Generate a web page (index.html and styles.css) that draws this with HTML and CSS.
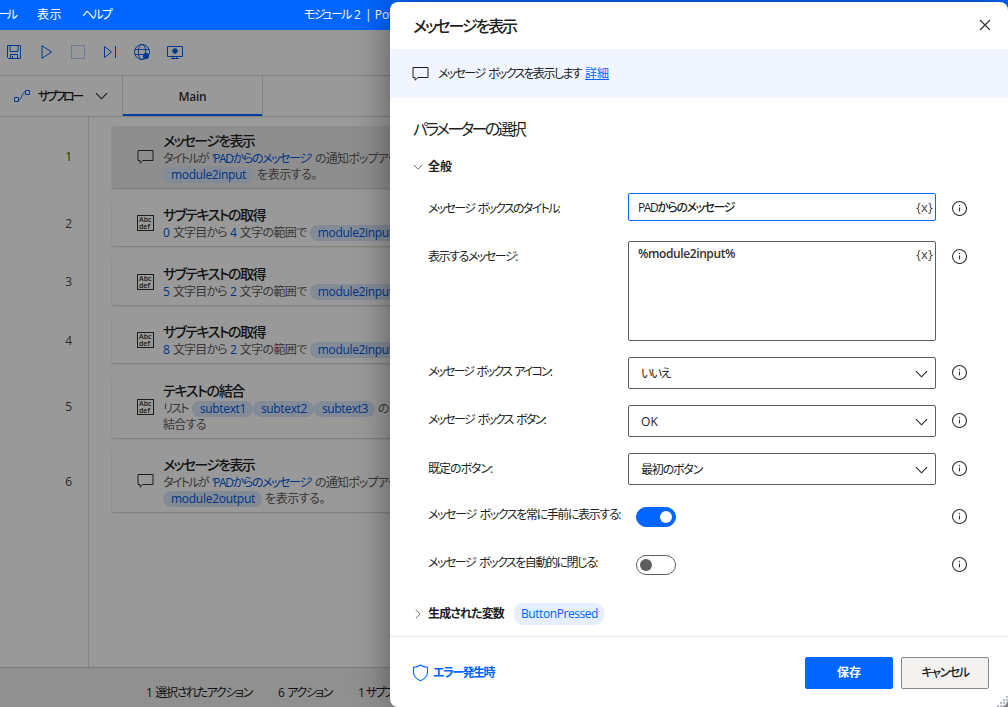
FILE: index.html
```html
<!DOCTYPE html>
<html lang="ja">
<head>
<meta charset="utf-8">
<title>メッセージを表示</title>
<link rel="stylesheet" href="styles.css">
</head>
<body>
<svg class="defs" aria-hidden="true">
  <symbol id="chat" viewBox="0 0 16 16"><path d="M.5 1.5h15v10H5.5l-3 2.700v-2.700h-2z" fill="none" stroke="currentColor"/></symbol>
  <symbol id="info" viewBox="0 0 16 16"><circle cx="8.500" cy="8.500" r="7" fill="none" stroke="currentColor" stroke-width="1.100"/><path d="M8.500 7.500v4M8.500 5v1.200" stroke="currentColor"/></symbol>
  <symbol id="down" viewBox="0 0 14 8"><path d="M1 1l6 6 6-6" fill="none" stroke="currentColor" stroke-width="1.100"/></symbol>
</svg>
<div class="window">
  <header class="titlebar">
    <span class="menu menu-tool" data-w="17">ール</span>
    <span class="menu menu-view" data-w="25">表示</span>
    <span class="menu menu-help" data-w="29">ヘルプ</span>
    <span class="app-title"><span data-w="55">モジュール 2</span><span class="app-name">| Pow</span></span>
  </header>
  <div class="workspace">
    <div class="toolbar">
      <svg class="tool" width="16" height="16" viewBox="0 0 16 16"><path d="M1.500 1.500h13v13h-12l-1-1zM4 1.500v6h8v-6M4.500 14.500v-4h7v4M6.500 14.500v-2.500" /></svg>
      <svg class="tool" width="16" height="16" viewBox="0 0 16 16"><path d="M4 1.700v12.600l9.500-6.300z"/></svg>
      <svg class="tool tool-off" width="16" height="16" viewBox="0 0 16 16"><path d="M1.500 1.500h13v13h-13z"/></svg>
      <svg class="tool" width="16" height="16" viewBox="0 0 16 16"><path d="M2.500 2.500v11l7-5.500zM13.500 2v12"/></svg>
      <svg class="tool" width="18" height="18" viewBox="0 0 18 18"><circle cx="9" cy="9" r="7.500"/><ellipse cx="9" cy="9" rx="3.700" ry="7.500"/><path d="M2 6.500h14M2 11.500h14"/><circle cx="13" cy="13" r="2.700" class="solid"/></svg>
      <svg class="tool screen" width="18" height="16" viewBox="0 0 18 16"><path d="M1.500 2.500h15v10h-15zM7.500 12.500v2M10.500 12.500v2M5 14.500h8"/><circle cx="9" cy="7" r="2.300" class="solid"/></svg>
    </div>
    <div class="tabs">
      <div class="subflow">
        <svg class="flow" width="18" height="14" viewBox="0 0 18 14"><path d="M1.500 8.500h4v4h-4zM12.500 1.500h4v4h-4zM5.500 11c4 0 3-8 7-8"/></svg>
        <span class="semi" data-w="44">サブフロー</span>
        <svg class="caret" width="13" height="8"><use href="#down"/></svg>
      </div>
      <div class="tab"><span class="latin-semi" data-w="28">Main</span></div>
    </div>
    <main class="canvas">
      <div class="gutter">
        <div class="num tall">1</div><div class="num">2</div><div class="num">3</div><div class="num">4</div><div class="num tall">5</div><div class="num tall">6</div>
      </div>
      <div class="actions">
        <section class="card tall selected">
          <svg class="glyph" width="17" height="16"><use href="#chat"/></svg>
          <div class="detail">
            <h3><span data-w="91">メッセージを表示</span></h3>
            <p><span data-w="45">タイトルが</span><a class="gap4" data-w="99">'PADからのメッセージ'</a><span class="gap4" data-w="92">の通知ポップアップ</span></p>
            <p><b class="chip"><span data-w="75">module2input</span></b><span class="gap4" data-w="60">を表示する。</span></p>
          </div>
        </section>
        <section class="card">
          <div class="abc"><span>Abc</span><span>def</span></div>
          <div class="detail">
            <h3><span data-w="102">サブテキストの取得</span></h3>
            <p><a>0</a><span class="gap3" data-w="54">文字目から</span><a class="gap3">4</a><span class="gap3" data-w="67">文字の範囲で</span><b class="chip gap3"><span data-w="75">module2input</span></b></p>
          </div>
        </section>
        <section class="card">
          <div class="abc"><span>Abc</span><span>def</span></div>
          <div class="detail">
            <h3><span data-w="102">サブテキストの取得</span></h3>
            <p><a>5</a><span class="gap3" data-w="54">文字目から</span><a class="gap3">2</a><span class="gap3" data-w="67">文字の範囲で</span><b class="chip gap3"><span data-w="75">module2input</span></b></p>
          </div>
        </section>
        <section class="card">
          <div class="abc"><span>Abc</span><span>def</span></div>
          <div class="detail">
            <h3><span data-w="102">サブテキストの取得</span></h3>
            <p><a>8</a><span class="gap3" data-w="54">文字目から</span><a class="gap3">2</a><span class="gap3" data-w="67">文字の範囲で</span><b class="chip gap3"><span data-w="75">module2input</span></b></p>
          </div>
        </section>
        <section class="card tall">
          <div class="abc"><span>Abc</span><span>def</span></div>
          <div class="detail">
            <h3><span data-w="81">テキストの結合</span></h3>
            <p><span data-w="25">リスト</span><b class="chip gap4"><span data-w="46">subtext1</span></b><b class="chip"><span data-w="46">subtext2</span></b><b class="chip"><span data-w="46">subtext3</span></b><span class="gap3" data-w="50">の項目を</span></p>
            <p><span data-w="43">結合する</span></p>
          </div>
        </section>
        <section class="card tall">
          <svg class="glyph" width="17" height="16"><use href="#chat"/></svg>
          <div class="detail">
            <h3><span data-w="91">メッセージを表示</span></h3>
            <p><span data-w="45">タイトルが</span><a class="gap4" data-w="99">'PADからのメッセージ'</a><span class="gap4" data-w="92">の通知ポップアップ</span></p>
            <p><b class="chip"><span data-w="84">module2output</span></b><span class="gap3" data-w="60">を表示する。</span></p>
          </div>
        </section>
      </div>
    </main>
    <footer class="status">
      <span data-w="106">1 選択されたアクション</span>
      <span data-w="54">6 アクション</span>
      <span data-w="53">1 サブフロー</span>
    </footer>
    <div class="shade"></div>
  </div>
</div>

<div class="dialog" role="dialog">
  <header class="dialog-head">
    <h1><span data-w="103">メッセージを表示</span></h1>
    <svg class="close" width="12" height="12" viewBox="0 0 12 12"><path d="M1 1l10 10M11 1L1 11" stroke="currentColor" stroke-width="1.200"/></svg>
  </header>
  <div class="banner">
    <svg width="17" height="16"><use href="#chat"/></svg>
    <span class="banner-text" data-w="143">メッセージ ボックスを表示します</span>
    <a class="more" data-w="24">詳細</a>
  </div>
  <div class="dialog-body">
    <h2><span data-w="111">パラメーターの選択</span></h2>
    <div class="section-head"><svg class="fold" width="10" height="6"><use href="#down"/></svg><span class="strong" data-w="24">全般</span></div>
    <div class="form">
      <div class="row">
        <label class="high"><span data-w="131">メッセージ ボックスのタイトル:</span></label>
        <div class="control"><div class="input focused"><span class="semi" data-w="96">PADからのメッセージ</span><span class="var" data-w="17">{x}</span></div></div>
        <svg class="info" width="17" height="17" ><use href="#info" width="16" height="16"/></svg>
      </div>
      <div class="row row-area">
        <label class="high"><span data-w="89">表示するメッセージ:</span></label>
        <div class="control"><div class="input area"><span class="latin-semi" data-w="97">%module2input%</span><span class="var" data-w="17">{x}</span></div></div>
        <svg class="info" width="17" height="17"><use href="#info" width="16" height="16"/></svg>
      </div>
      <div class="row">
        <label><span data-w="123">メッセージ ボックス アイコン:</span></label>
        <div class="control"><div class="select"><span data-w="29">いいえ</span><svg width="13" height="8"><use href="#down"/></svg></div></div>
        <svg class="info" width="17" height="17"><use href="#info" width="16" height="16"/></svg>
      </div>
      <div class="row">
        <label><span data-w="117">メッセージ ボックス ボタン:</span></label>
        <div class="control"><div class="select"><span data-w="17">OK</span><svg width="13" height="8"><use href="#down"/></svg></div></div>
        <svg class="info" width="17" height="17"><use href="#info" width="16" height="16"/></svg>
      </div>
      <div class="row">
        <label class="high"><span data-w="64">既定のボタン:</span></label>
        <div class="control"><div class="select"><span data-w="61">最初のボタン</span><svg width="13" height="8"><use href="#down"/></svg></div></div>
        <svg class="info" width="17" height="17"><use href="#info" width="16" height="16"/></svg>
      </div>
      <div class="row">
        <label class="low"><span data-w="192">メッセージ ボックスを常に手前に表示する:</span></label>
        <div class="control"><div class="toggle on"><i></i></div></div>
        <svg class="info" width="17" height="17"><use href="#info" width="16" height="16"/></svg>
      </div>
      <div class="row">
        <label class="low"><span data-w="169">メッセージ ボックスを自動的に閉じる:</span></label>
        <div class="control"><div class="toggle"><i></i></div></div>
        <svg class="info" width="17" height="17"><use href="#info" width="16" height="16"/></svg>
      </div>
    </div>
    <div class="section-head produced"><svg class="fold closed" width="10" height="6"><use href="#down"/></svg><span class="strong" data-w="76">生成された変数</span><span class="badge"><span data-w="77">ButtonPressed</span></span></div>
  </div>
  <footer class="dialog-foot">
    <svg class="shield" width="17" height="18" viewBox="0 0 17 18"><path d="M8.500 1C6.500 2.500 4 3.200 1.500 3.200V8c0 4.200 3 7 7 8.800 4-1.800 7-4.600 7-8.800V3.200C13 3.200 10.500 2.500 8.500 1z" fill="none" stroke="currentColor" stroke-width="1.100"/></svg>
    <span class="on-error" data-w="61">エラー発生時</span>
    <button class="btn primary"><span data-w="24">保存</span></button>
    <button class="btn"><span data-w="47">キャンセル</span></button>
  </footer>
  <svg class="grip" width="11" height="11" viewBox="0 0 11 11"><path d="M9 0h2v2H9zM6 3h2v2H6zM9 3h2v2H9zM3 6h2v2H3zM6 6h2v2H6zM9 6h2v2H9zM0 9h2v2H0zM3 9h2v2H3zM6 9h2v2H6z"/></svg>
</div>
<script src="fit.js"></script>
</body>
</html>
```
FILE: styles.css
```css
* { box-sizing: border-box; }
body {
  margin: 0;
  width: 1008px;
  height: 707px;
  overflow: hidden;
  position: relative;
  font: 12px/16px "Open Sans", "Noto Sans CJK JP", sans-serif;
  font-feature-settings: "palt";
  word-spacing: 2px;
  color: #201f1e;
  white-space: nowrap;
}
h1, h2, h3, p { margin: 0; }
svg { flex: none; display: block; }
[data-w] { display: inline-block; }
.defs { position: absolute; width: 0; height: 0; }
.semi { font-weight: 500; }
.latin-semi { font-weight: 600; color: #323130; }
.strong { font-weight: 700; }
.gap3 { margin-left: 3px; }
.gap4 { margin-left: 4px; }

.window { height: 707px; display: flex; flex-direction: column; overflow: hidden; }
.titlebar { height: 30px; flex: none; display: flex; align-items: center; background: #0066ff; color: #fff; }
.menu-tool { margin-left: -2px; }
.menu-view { margin-left: 22px; }
.menu-help { margin-left: 20px; }
.app-title { margin-left: 193px; display: flex; gap: 6px; }
.app-name { word-spacing: 0; }

.workspace { position: relative; flex: 1; display: flex; flex-direction: column; background: #fff; overflow: hidden; }
.shade { position: absolute; inset: 0; background: rgba(0, 0, 0, .4); }
.toolbar { height: 46px; flex: none; display: flex; align-items: center; gap: 16px; padding: 0 0 2px 6px; border-bottom: 1px solid #d8d8d8; }
.tool, .flow { fill: none; stroke: #0060f0; }
.tool .solid { fill: #0060f0; }
.tool-off { stroke: #b8cdf0; }
.tool:nth-child(5) { margin-left: -1px; }
.screen { margin-left: -1px; }
.tabs { height: 41px; flex: none; display: flex; border-bottom: 1px solid #d8d8d8; }
.subflow { width: 123px; display: flex; align-items: center; padding-left: 13px; border-right: 1px solid #d8d8d8; }
.subflow .semi { margin-left: 7px; padding-top: 2px; }
.caret { margin-left: 13px; color: #201f1e; }
.tab { width: 140px; display: flex; justify-content: center; align-items: center; padding-top: 2px; border-right: 1px solid #d8d8d8; box-shadow: inset 0 -2px #0066ff; }

.canvas { flex: 1; display: flex; min-height: 0; }
.gutter { width: 89px; padding: 9px 16px 0 0; border-right: 1px solid #d8d8d8; color: #484644; display: flex; flex-direction: column; gap: 13px; text-align: right; }
.num { height: 45.5px; line-height: 46px; }
.num.tall { height: 61.5px; line-height: 62px; }
.actions { width: 896px; padding: 9px 0 0 23px; display: flex; flex-direction: column; gap: 13px; }
.card { height: 45.5px; flex: none; display: flex; align-items: center; gap: 9px; padding-left: 25px; background: #fff; border-radius: 2px; box-shadow: 0 1px 2px rgba(0, 0, 0, .2); }
.card.tall { height: 61.5px; }
.card.selected { background: #ededed; }
.glyph { color: #323130; }
.abc { width: 17px; height: 16px; display: flex; flex-direction: column; padding: 0 0 0 1px; border: 1px solid #323130; font: 600 7px/7px "Open Sans", sans-serif; color: #323130; }
.detail { align-self: flex-start; padding-top: 5.5px; color: #605e5c; }
.detail h3 { height: 19px; font-size: 14px; line-height: 18px; font-weight: 500; color: #201f1e; }
.detail p { height: 16px; display: flex; }
.detail a { color: #0058e0; }
.chip { height: 16px; padding: 0 7px 0 8px; border-radius: 8px; background: #dbe8fc; color: #0058e0; font-weight: 400; }
.status { height: 40px; flex: none; display: flex; align-items: center; gap: 26px; padding: 10px 0 0 146px; border-top: 1px solid #d2d0ce; background: #f0f0f0; }

.dialog { position: absolute; left: 390px; top: 2px; width: 618px; height: 705px; display: flex; flex-direction: column; background: #fff; border-radius: 8px; box-shadow: 0 0 36px rgba(0, 0, 0, .42); overflow: hidden; }
.dialog-head { height: 47px; flex: none; display: flex; align-items: center; justify-content: space-between; padding: 0 17px 0 23px; }
.dialog-head h1 { font-size: 16px; line-height: 22px; font-weight: 500; }
.close { color: #323130; margin-top: -1px; }
.banner { height: 49px; flex: none; display: flex; align-items: center; padding-left: 22px; background: #f0f5ff; }
.banner-text { margin-left: 9px; }
.more { margin-left: 4px; color: #0066ff; text-decoration: underline; }
.dialog-body { flex: 1; padding: 20px 0 0 23px; }
.dialog-body h2 { height: 22px; font-size: 16px; line-height: 22px; font-weight: 400; }
.section-head { height: 22px; margin-top: 16px; display: flex; align-items: center; }
.fold { margin-right: 5px; color: #484644; }
.fold.closed { transform: rotate(-90deg); }
.form { margin-top: 15px; padding-left: 15px; }
.row { height: 48px; display: grid; grid-template-columns: 200px 308px 32px; align-items: start; }
.row-area { height: 116px; }
.row label { padding-top: 7px; }
.row label.high { padding-top: 8px; }
.row label.low { padding-top: 6px; }
.info { margin: 7px 0 0 15px; color: #323130; overflow: visible; }
.input { height: 28px; display: flex; justify-content: space-between; align-items: flex-start; padding: 6px 2px 0 9px; border: 1px solid #605e5c; border-radius: 2px; background: #fff; }
.input.focused { border-color: #0066ff; }
.input.area { height: 100px; padding-top: 4px; }
.var { color: #484644; font-size: 13px; }
.focused .var { margin-top: -1px; }
.select { height: 32px; display: flex; align-items: center; justify-content: space-between; padding: 1px 7px 0 12px; border: 1px solid #605e5c; border-radius: 2px; }
.toggle { width: 40px; height: 20px; margin: 6px 0 0 8px; padding: 0 3px; display: flex; align-items: center; border: 1px solid #605e5c; border-radius: 10px; }
.toggle i { width: 12px; height: 12px; border-radius: 50%; background: #605e5c; }
.toggle.on { justify-content: flex-end; background: #0066ff; border-color: #0066ff; }
.toggle.on i { background: #fff; }
.produced { margin-top: 6px; }
.badge { height: 22px; margin-left: 10px; padding: 3px 6px 3px 7px; border-radius: 9px; background: #e5efff; color: #0066ff; }
.dialog-foot { height: 71px; flex: none; display: flex; align-items: center; padding: 1px 19px 0 22px; border-top: 1px solid #eaeaea; }
.shield, .on-error { color: #0066ff; }
.on-error { margin: 1px auto 0 4px; font-weight: 700; }
.btn { width: 88px; height: 32px; margin-left: 8px; padding: 0; border: 1px solid #8a8886; border-radius: 2px; background: #f3f2f1; font: inherit; font-weight: 500; color: #201f1e; font-feature-settings: inherit; }
.btn.primary { background: #0066ff; border-color: #0066ff; color: #fff; font-weight: 700; }
.grip { position: absolute; right: 0; bottom: 0; fill: #b4bac6; }
```
FILE: fit.js
```js
document.querySelectorAll('[data-w]').forEach(el => {
  const target = Number(el.dataset.w);
  const natural = el.getBoundingClientRect().width;
  el.style.letterSpacing = (target - natural) / el.textContent.length + 'px';
});
```
